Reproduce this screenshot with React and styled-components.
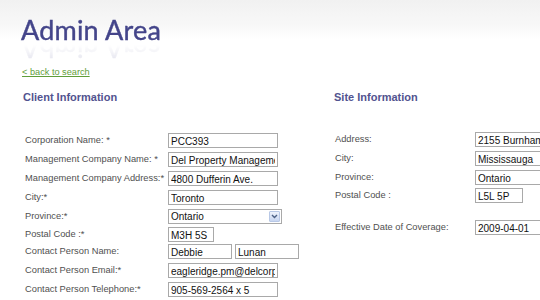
import React from "react";
import styled, { createGlobalStyle } from "styled-components";

const GlobalStyle = createGlobalStyle`
  body {
    margin: 0;
    background: #fff;
    overflow: hidden;
  }
`;

const Page = styled.div`
  width: 640px;
  min-height: 300px;
  font-family: "Liberation Sans", Arial, sans-serif;
  background: linear-gradient(#f1f1f1 0px, #f8f8f8 26px, #fff 40px) no-repeat;
`;

const Header = styled.div`
  padding: 15px 0 0 21px;
  height: 53px;
  box-sizing: border-box;
`;

const Title = styled.h1`
  margin: 0;
  font-family: Lato, "Open Sans", sans-serif;
  font-weight: 400;
  font-size: 27px;
  line-height: 30px;
  letter-spacing: 0.2px;
  color: #44458a;
  -webkit-text-stroke: 0.4px #44458a;
  display: inline-block;
  -webkit-box-reflect: below -12px linear-gradient(rgba(0, 0, 0, 0.16), rgba(0, 0, 0, 0.05) 40%, transparent 60%);
`;

const BackLink = styled.a`
  display: inline-block;
  margin: 14px 0 0 22px;
  font-size: 9.2px;
  color: #5f9e3a;
  text-decoration: underline;
`;

const Columns = styled.div`
  display: flex;
  padding-left: 22px;
  margin-top: 11px;
`;

const Column = styled.div`
  width: ${(p) => p.$width}px;
  flex: none;
`;

const SectionTitle = styled.h2`
  margin: 0 0 0 1px;
  font-size: 11px;
  font-weight: 700;
  line-height: 14px;
  color: #52538f;
`;

const Form = styled.div`
  display: flex;
  flex-direction: column;
  margin-top: ${(p) => p.$top}px;
  padding-left: ${(p) => p.$indent}px;
`;

const Row = styled.div`
  display: flex;
  align-items: flex-start;
  height: ${(p) => p.$h || 19}px;
`;

const Label = styled.div`
  width: ${(p) => p.$w}px;
  flex: none;
  font-size: 9.3px;
  line-height: 15px;
  color: #505050;
  white-space: nowrap;
`;

const Fields = styled.div`
  display: flex;
  gap: 3px;
`;

const Field = styled.input`
  width: ${(p) => p.$w}px;
  height: 15px;
  box-sizing: border-box;
  margin: 0;
  padding: 1px 2px 0;
  border: 1px solid #a9a9a9;
  font-family: "Liberation Sans", Arial, sans-serif;
  font-size: 10px;
  color: #111;
  background: #fff;
  outline: none;
`;

const Select = styled.div`
  width: 114px;
  height: 15px;
  box-sizing: border-box;
  border: 1px solid #a9a9a9;
  display: flex;
  align-items: center;
  justify-content: space-between;
  padding: 0 1px 0 2px;
  font-size: 10px;
  color: #111;
`;

const ArrowBox = styled.span`
  width: 11px;
  height: 11px;
  box-sizing: border-box;
  border: 1px solid #b8c8e6;
  border-radius: 1px;
  background: linear-gradient(#eef3fc, #c8d6f1);
  display: flex;
  align-items: center;
  justify-content: center;
`;

const left = [
  { label: "Corporation Name: *", fields: [{ v: "PCC393", w: 110 }] },
  { label: "Management Company Name: *", fields: [{ v: "Del Property Management", w: 110 }] },
  { label: "Management Company Address:*", fields: [{ v: "4800 Dufferin Ave.", w: 110 }] },
  { label: "City:*", fields: [{ v: "Toronto", w: 110 }] },
  { label: "Province:*", select: "Ontario", h: 18 },
  { label: "Postal Code :*", fields: [{ v: "M3H 5S", w: 46 }], h: 17 },
  { label: "Contact Person Name:", fields: [{ v: "Debbie", w: 64 }, { v: "Lunan", w: 64 }], h: 19 },
  { label: "Contact Person Email:*", fields: [{ v: "eagleridge.pm@delcorp.ca", w: 110 }] },
  { label: "Contact Person Telephone:*", fields: [{ v: "905-569-2564 x 5", w: 110 }] },
];

const right = [
  { label: "Address:", fields: [{ v: "2155 Burnhamthorpe Rd.", w: 120 }] },
  { label: "City:", fields: [{ v: "Mississauga", w: 120 }] },
  { label: "Province:", fields: [{ v: "Ontario", w: 120 }], h: 18 },
  { label: "Postal Code :", fields: [{ v: "L5L 5P", w: 48 }], h: 32 },
  { label: "Effective Date of Coverage:", fields: [{ v: "2009-04-01", w: 120 }] },
];

function Chevron() {
  return (
    <ArrowBox>
      <svg width="7" height="5" viewBox="0 0 7 5">
        <path d="M1 1l2.5 2.5L6 1" fill="none" stroke="#4d6185" strokeWidth="1.4" />
      </svg>
    </ArrowBox>
  );
}

function FormRows({ rows, labelWidth, top, indent }) {
  return (
    <Form $top={top} $indent={indent}>
      {rows.map((r) => (
        <Row key={r.label} $h={r.h}>
          <Label $w={labelWidth}>{r.label}</Label>
          {r.select ? (
            <Select>
              <span>{r.select}</span>
              <Chevron />
            </Select>
          ) : (
            <Fields>
              {r.fields.map((f) => (
                <Field key={f.v} $w={f.w} defaultValue={f.v} readOnly />
              ))}
            </Fields>
          )}
        </Row>
      ))}
    </Form>
  );
}

export default function App() {
  return (
    <>
      <GlobalStyle />
      <Page>
        <Header>
          <Title>Admin Area</Title>
        </Header>
        <BackLink href="#">&lt; back to search</BackLink>
        <Columns>
          <Column $width={311}>
            <SectionTitle>Client Information</SectionTitle>
            <FormRows rows={left} labelWidth={143} top={29} indent={3} />
          </Column>
          <Column $width={300}>
            <SectionTitle>Site Information</SectionTitle>
            <FormRows rows={right} labelWidth={140} top={28} indent={2} />
          </Column>
        </Columns>
      </Page>
    </>
  );
}
